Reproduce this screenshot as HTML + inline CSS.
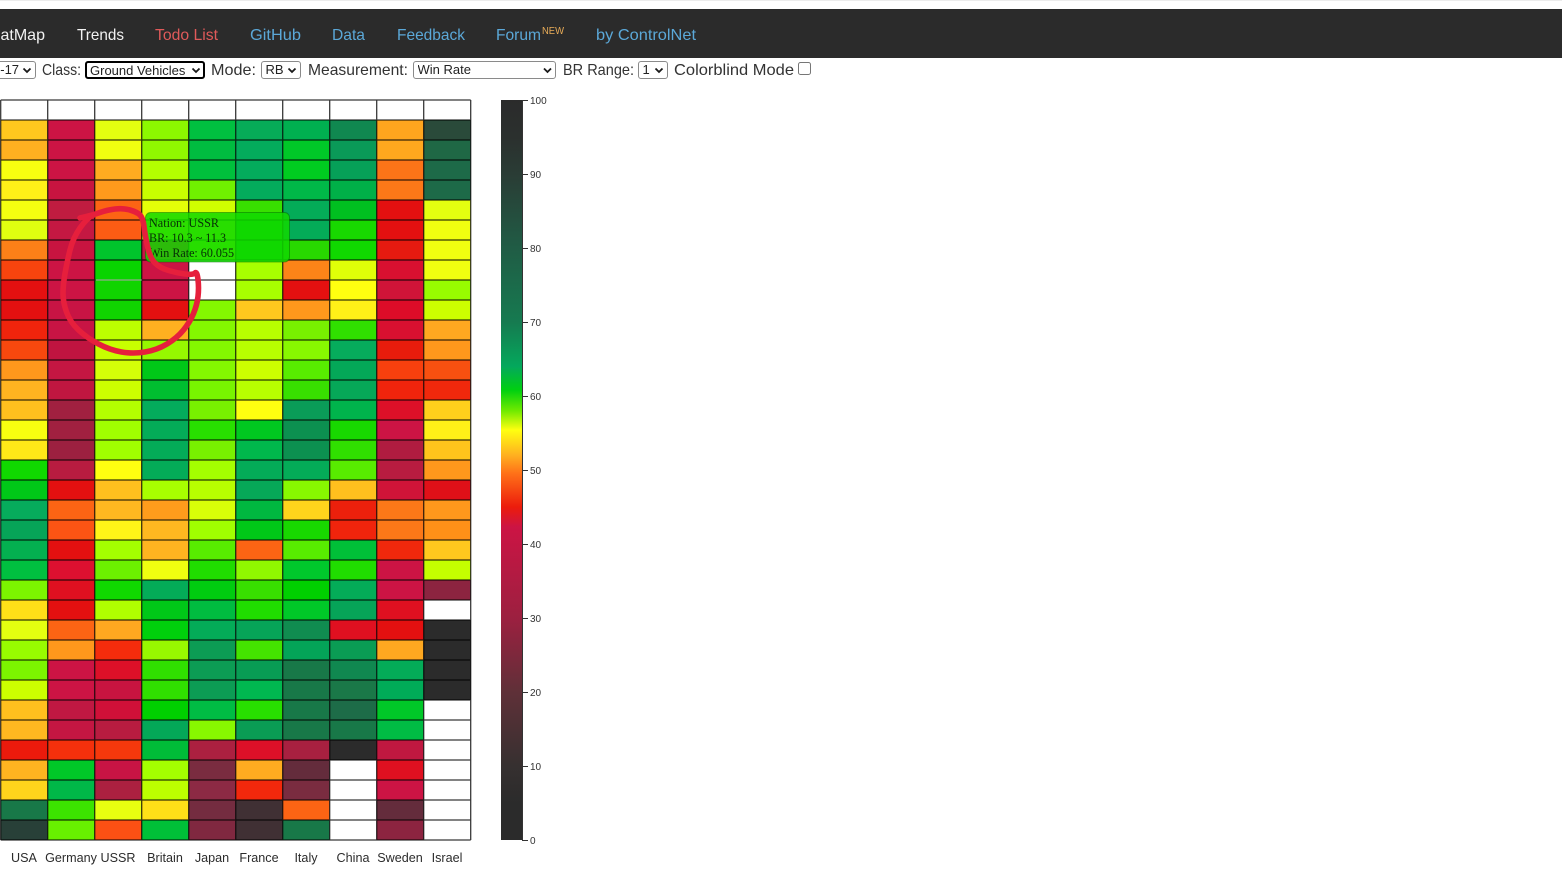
<!DOCTYPE html>
<html><head><meta charset="utf-8"><title>HeatMap</title>
<style>
html,body{margin:0;padding:0;background:#fff;width:1562px;height:878px;overflow:hidden}
svg{position:absolute;left:0;top:0;z-index:2;pointer-events:none}
rect.c,g.r rect{width:47px;height:20px}
select{position:absolute;top:61px;height:18px;box-sizing:border-box;margin:0;padding:0 0 1px 3.5px;font:13px "Liberation Sans",sans-serif;background:#fff;color:#222;border:1px solid #8a8a8a;border-radius:3px;appearance:none;-webkit-appearance:none}
input{position:absolute;left:797.5px;top:62px;width:13px;height:13px;margin:0}
.n{font:16px "Liberation Sans",sans-serif;fill:#5ba8d8}
.l{font:16px "Liberation Sans",sans-serif;fill:#333}
.x{font:12.6px "Liberation Sans",sans-serif;fill:#2c2c2c;text-anchor:middle}
.t{font:10px "Liberation Sans",sans-serif;fill:#333}
.p{font:12.2px "Liberation Serif",serif;fill:#063006}
</style></head><body>
<select style="left:-51px;width:87px"><option>2023-11-17</option></select>
<select style="left:85px;width:120px;border:2px solid #000;padding-left:3px;padding-bottom:0"><option>Ground Vehicles</option></select>
<select style="left:261px;width:40px"><option>RB</option></select>
<select style="left:413px;width:143px"><option>Win Rate</option></select>
<select style="left:638px;width:30px"><option>1</option></select>
<input type="checkbox">
<svg width="1562" height="878" viewBox="0 0 1562 878">
<defs><linearGradient id="g" x1="0" y1="0" x2="0" y2="1">
<stop offset="0" stop-color="#2b2b2b"/><stop offset=".05" stop-color="#2b302e"/><stop offset=".1" stop-color="#2a3c35"/><stop offset=".2" stop-color="#205c45"/><stop offset=".3" stop-color="#167a50"/><stop offset=".36" stop-color="#04a85c"/><stop offset=".392" stop-color="#00d010"/><stop offset=".42" stop-color="#70ea00"/><stop offset=".446" stop-color="#ffff10"/><stop offset=".48" stop-color="#ffb020"/><stop offset=".505" stop-color="#ff7018"/><stop offset=".55" stop-color="#ec1c0c"/><stop offset=".577" stop-color="#cc1444"/><stop offset=".7" stop-color="#9c2040"/><stop offset=".8" stop-color="#5f3038"/><stop offset=".9" stop-color="#363030"/><stop offset=".95" stop-color="#2b2b2b"/><stop offset="1" stop-color="#2b2b2b"/>
</linearGradient></defs>
<rect x="0" y="0" width="1562" height="1" fill="#ececec"/>
<rect x="0" y="9" width="1562" height="49" fill="#2b2b2b"/>
<text class="n" style="fill:#f2f2f2" x="-20" y="40" textLength="65" lengthAdjust="spacingAndGlyphs">HeatMap</text>
<text class="n" style="fill:#f2f2f2" x="77" y="40" textLength="47" lengthAdjust="spacingAndGlyphs">Trends</text>
<text class="n" style="fill:#e05a5a" x="155" y="40" textLength="63" lengthAdjust="spacingAndGlyphs">Todo List</text>
<text class="n" x="250" y="40" textLength="51" lengthAdjust="spacingAndGlyphs">GitHub</text>
<text class="n" x="332" y="40" textLength="33" lengthAdjust="spacingAndGlyphs">Data</text>
<text class="n" x="397" y="40" textLength="68" lengthAdjust="spacingAndGlyphs">Feedback</text>
<text class="n" x="496" y="40" textLength="45" lengthAdjust="spacingAndGlyphs">Forum</text>
<text x="542" y="34" style="font:10px 'Liberation Sans',sans-serif;fill:#e8ac58" textLength="22" lengthAdjust="spacingAndGlyphs">NEW</text>
<text class="n" x="596" y="40" textLength="100" lengthAdjust="spacingAndGlyphs">by ControlNet</text>
<text class="l" x="42" y="75" textLength="39" lengthAdjust="spacingAndGlyphs">Class:</text>
<text class="l" x="211" y="75" textLength="45" lengthAdjust="spacingAndGlyphs">Mode:</text>
<text class="l" x="308" y="75" textLength="100" lengthAdjust="spacingAndGlyphs">Measurement:</text>
<text class="l" x="563" y="75" textLength="71" lengthAdjust="spacingAndGlyphs">BR Range:</text>
<text class="l" x="674" y="75" textLength="120" lengthAdjust="spacingAndGlyphs">Colorblind Mode</text>
<path fill="none" stroke="#1a1a1a" stroke-width="1.8" d="M23.5 68.5L27 72L30.5 68.5M192.5 68.5L196 72L199.5 68.5M288.5 68.5L292 72L295.5 68.5M544 68.5L547.5 72L551 68.5M655.5 68.5L659 72L662.5 68.5"/>
<g transform="translate(.7 0)">
<g class="r" transform="translate(0 100)"><rect x="0" fill="#fff"/><rect x="47" fill="#fff"/><rect x="94" fill="#fff"/><rect x="141" fill="#fff"/><rect x="188" fill="#fff"/><rect x="235" fill="#fff"/><rect x="282" fill="#fff"/><rect x="329" fill="#fff"/><rect x="376" fill="#fff"/><rect x="423" fill="#fff"/></g>
<g class="r" transform="translate(0 120)"><rect x="0" fill="#ffc81e"/><rect x="47" fill="#cc1444"/><rect x="94" fill="#e4ff10"/><rect x="141" fill="#8cf800"/><rect x="188" fill="#00c040"/><rect x="235" fill="#06ac58"/><rect x="282" fill="#00b050"/><rect x="329" fill="#108850"/><rect x="376" fill="#ffa51e"/><rect x="423" fill="#2a4a3a"/></g>
<g class="r" transform="translate(0 140)"><rect x="0" fill="#ffb020"/><rect x="47" fill="#cc1444"/><rect x="94" fill="#f0ff10"/><rect x="141" fill="#90f800"/><rect x="188" fill="#00bc40"/><rect x="235" fill="#04ac5c"/><rect x="282" fill="#00c828"/><rect x="329" fill="#0a9a58"/><rect x="376" fill="#ffa81e"/><rect x="423" fill="#1f6845"/></g>
<g class="r" transform="translate(0 160)"><rect x="0" fill="#f8ff10"/><rect x="47" fill="#cc1444"/><rect x="94" fill="#ffac20"/><rect x="141" fill="#b4ff00"/><rect x="188" fill="#00c03c"/><rect x="235" fill="#04ac5c"/><rect x="282" fill="#00cc20"/><rect x="329" fill="#06a058"/><rect x="376" fill="#fc7418"/><rect x="423" fill="#1d6a48"/></g>
<g class="r" transform="translate(0 180)"><rect x="0" fill="#fff018"/><rect x="47" fill="#c81440"/><rect x="94" fill="#ff9a1c"/><rect x="141" fill="#c8ff00"/><rect x="188" fill="#70f000"/><rect x="235" fill="#04ac5c"/><rect x="282" fill="#00b848"/><rect x="329" fill="#00b048"/><rect x="376" fill="#fc7818"/><rect x="423" fill="#1d6a48"/></g>
<g class="r" transform="translate(0 200)"><rect x="0" fill="#f4ff10"/><rect x="47" fill="#c01c40"/><rect x="94" fill="#fc6414"/><rect x="141" fill="#e4ff08"/><rect x="188" fill="#d0ff00"/><rect x="235" fill="#38e000"/><rect x="282" fill="#04ac58"/><rect x="329" fill="#00c020"/><rect x="376" fill="#e41010"/><rect x="423" fill="#e4ff10"/></g>
<g class="r" transform="translate(0 220)"><rect x="0" fill="#e0ff10"/><rect x="47" fill="#c41842"/><rect x="94" fill="#fc5c14"/><rect x="141" fill="#c8ff00"/><rect x="188" fill="#b0ff00"/><rect x="235" fill="#10d800"/><rect x="282" fill="#04ac58"/><rect x="329" fill="#18d800"/><rect x="376" fill="#e41010"/><rect x="423" fill="#f0ff10"/></g>
<g class="r" transform="translate(0 240)"><rect x="0" fill="#fc8018"/><rect x="47" fill="#c81440"/><rect x="94" fill="#00c42c"/><rect x="141" fill="#c81444"/><rect x="188" fill="#a8ff00"/><rect x="235" fill="#10d800"/><rect x="282" fill="#28d800"/><rect x="329" fill="#10d800"/><rect x="376" fill="#e61a10"/><rect x="423" fill="#f0ff10"/></g>
<g class="r" transform="translate(0 260)"><rect x="0" fill="#f8440e"/><rect x="47" fill="#cc1444"/><rect x="94" fill="#08d400"/><rect x="141" fill="#cc1444"/><rect x="188" fill="#fff"/><rect x="235" fill="#a8ff00"/><rect x="282" fill="#fc8418"/><rect x="329" fill="#e0ff08"/><rect x="376" fill="#d81030"/><rect x="423" fill="#f0ff10"/></g>
<g class="r" transform="translate(0 280)"><rect x="0" fill="#e41010"/><rect x="47" fill="#cc1444"/><rect x="94" fill="#10d400"/><rect x="141" fill="#cc1444"/><rect x="188" fill="#fff"/><rect x="235" fill="#a8ff00"/><rect x="282" fill="#e41010"/><rect x="329" fill="#ffff10"/><rect x="376" fill="#d01438"/><rect x="423" fill="#98fc00"/></g>
<g class="r" transform="translate(0 300)"><rect x="0" fill="#e41010"/><rect x="47" fill="#c81444"/><rect x="94" fill="#10d400"/><rect x="141" fill="#e41010"/><rect x="188" fill="#84f800"/><rect x="235" fill="#ffc81e"/><rect x="282" fill="#ff981c"/><rect x="329" fill="#fff018"/><rect x="376" fill="#dc0c28"/><rect x="423" fill="#ccff00"/></g>
<g class="r" transform="translate(0 320)"><rect x="0" fill="#f0240c"/><rect x="47" fill="#c81444"/><rect x="94" fill="#bcff00"/><rect x="141" fill="#ffb020"/><rect x="188" fill="#84f800"/><rect x="235" fill="#b8ff00"/><rect x="282" fill="#78f000"/><rect x="329" fill="#30e000"/><rect x="376" fill="#d81030"/><rect x="423" fill="#ffa820"/></g>
<g class="r" transform="translate(0 340)"><rect x="0" fill="#f8480e"/><rect x="47" fill="#c01440"/><rect x="94" fill="#c8ff00"/><rect x="141" fill="#96f800"/><rect x="188" fill="#84f800"/><rect x="235" fill="#b8ff00"/><rect x="282" fill="#88f800"/><rect x="329" fill="#06ac5c"/><rect x="376" fill="#e81c0c"/><rect x="423" fill="#ff981c"/></g>
<g class="r" transform="translate(0 360)"><rect x="0" fill="#ff981c"/><rect x="47" fill="#c41642"/><rect x="94" fill="#d4ff08"/><rect x="141" fill="#00c818"/><rect x="188" fill="#84f800"/><rect x="235" fill="#ccff00"/><rect x="282" fill="#58ec00"/><rect x="329" fill="#04a858"/><rect x="376" fill="#f8400e"/><rect x="423" fill="#f85010"/></g>
<g class="r" transform="translate(0 380)"><rect x="0" fill="#ffb420"/><rect x="47" fill="#c01640"/><rect x="94" fill="#ccff00"/><rect x="141" fill="#00be30"/><rect x="188" fill="#78f400"/><rect x="235" fill="#b8ff00"/><rect x="282" fill="#38e000"/><rect x="329" fill="#06a858"/><rect x="376" fill="#f0240c"/><rect x="423" fill="#f0280c"/></g>
<g class="r" transform="translate(0 400)"><rect x="0" fill="#ffc01e"/><rect x="47" fill="#a02040"/><rect x="94" fill="#b4ff00"/><rect x="141" fill="#04ac5c"/><rect x="188" fill="#78f000"/><rect x="235" fill="#ffff10"/><rect x="282" fill="#0a9c58"/><rect x="329" fill="#00b44c"/><rect x="376" fill="#dc1028"/><rect x="423" fill="#ffd01c"/></g>
<g class="r" transform="translate(0 420)"><rect x="0" fill="#f8ff10"/><rect x="47" fill="#a02040"/><rect x="94" fill="#a0ff00"/><rect x="141" fill="#04ac58"/><rect x="188" fill="#28e000"/><rect x="235" fill="#00c820"/><rect x="282" fill="#0c9050"/><rect x="329" fill="#18d800"/><rect x="376" fill="#cc1444"/><rect x="423" fill="#fff018"/></g>
<g class="r" transform="translate(0 440)"><rect x="0" fill="#ffe818"/><rect x="47" fill="#9c2040"/><rect x="94" fill="#a0ff00"/><rect x="141" fill="#04ac58"/><rect x="188" fill="#78f000"/><rect x="235" fill="#00b84c"/><rect x="282" fill="#0c9050"/><rect x="329" fill="#30e000"/><rect x="376" fill="#b01c40"/><rect x="423" fill="#ffc41c"/></g>
<g class="r" transform="translate(0 460)"><rect x="0" fill="#10d800"/><rect x="47" fill="#b81c40"/><rect x="94" fill="#ffff10"/><rect x="141" fill="#04ac58"/><rect x="188" fill="#a4ff00"/><rect x="235" fill="#04ac58"/><rect x="282" fill="#04ac58"/><rect x="329" fill="#58ec00"/><rect x="376" fill="#b81c40"/><rect x="423" fill="#ff981c"/></g>
<g class="r" transform="translate(0 480)"><rect x="0" fill="#00c818"/><rect x="47" fill="#e41010"/><rect x="94" fill="#ffc01e"/><rect x="141" fill="#a8ff00"/><rect x="188" fill="#b8ff00"/><rect x="235" fill="#06a858"/><rect x="282" fill="#88f800"/><rect x="329" fill="#ffc01e"/><rect x="376" fill="#d01438"/><rect x="423" fill="#e01018"/></g>
<g class="r" transform="translate(0 500)"><rect x="0" fill="#06ac5c"/><rect x="47" fill="#fc6414"/><rect x="94" fill="#ffb820"/><rect x="141" fill="#ff9c1c"/><rect x="188" fill="#d8ff08"/><rect x="235" fill="#00b840"/><rect x="282" fill="#ffd41c"/><rect x="329" fill="#ec200c"/><rect x="376" fill="#fc7818"/><rect x="423" fill="#ff981c"/></g>
<g class="r" transform="translate(0 520)"><rect x="0" fill="#06a458"/><rect x="47" fill="#fc5414"/><rect x="94" fill="#fff418"/><rect x="141" fill="#ffb820"/><rect x="188" fill="#a0ff00"/><rect x="235" fill="#00c818"/><rect x="282" fill="#18d800"/><rect x="329" fill="#f0240c"/><rect x="376" fill="#fc7818"/><rect x="423" fill="#ff9018"/></g>
<g class="r" transform="translate(0 540)"><rect x="0" fill="#04b050"/><rect x="47" fill="#e41010"/><rect x="94" fill="#a4ff00"/><rect x="141" fill="#ffb420"/><rect x="188" fill="#58ec00"/><rect x="235" fill="#fc6414"/><rect x="282" fill="#58ec00"/><rect x="329" fill="#00c038"/><rect x="376" fill="#f0280c"/><rect x="423" fill="#ffc81e"/></g>
<g class="r" transform="translate(0 560)"><rect x="0" fill="#00c040"/><rect x="47" fill="#dc1030"/><rect x="94" fill="#6cf000"/><rect x="141" fill="#f0ff10"/><rect x="188" fill="#20dc00"/><rect x="235" fill="#90f800"/><rect x="282" fill="#00c82c"/><rect x="329" fill="#20dc00"/><rect x="376" fill="#cc1444"/><rect x="423" fill="#c4ff00"/></g>
<g class="r" transform="translate(0 580)"><rect x="0" fill="#7cf400"/><rect x="47" fill="#e01020"/><rect x="94" fill="#10d800"/><rect x="141" fill="#04ac58"/><rect x="188" fill="#00cc10"/><rect x="235" fill="#38e000"/><rect x="282" fill="#00d000"/><rect x="329" fill="#04ac58"/><rect x="376" fill="#cc1444"/><rect x="423" fill="#8c2440"/></g>
<g class="r" transform="translate(0 600)"><rect x="0" fill="#ffe018"/><rect x="47" fill="#e41010"/><rect x="94" fill="#b0ff00"/><rect x="141" fill="#00c818"/><rect x="188" fill="#00bc40"/><rect x="235" fill="#20dc00"/><rect x="282" fill="#00c828"/><rect x="329" fill="#06a458"/><rect x="376" fill="#e01020"/><rect x="423" fill="#fff"/></g>
<g class="r" transform="translate(0 620)"><rect x="0" fill="#e4ff10"/><rect x="47" fill="#fc6414"/><rect x="94" fill="#ffa820"/><rect x="141" fill="#00d00c"/><rect x="188" fill="#04ac58"/><rect x="235" fill="#06a458"/><rect x="282" fill="#108c50"/><rect x="329" fill="#e01020"/><rect x="376" fill="#e41010"/><rect x="423" fill="#2b2b2b"/></g>
<g class="r" transform="translate(0 640)"><rect x="0" fill="#98fc00"/><rect x="47" fill="#ff981c"/><rect x="94" fill="#f42c0c"/><rect x="141" fill="#98f800"/><rect x="188" fill="#0c9c54"/><rect x="235" fill="#44e400"/><rect x="282" fill="#04a458"/><rect x="329" fill="#0a9c54"/><rect x="376" fill="#ffa820"/><rect x="423" fill="#2b2b2b"/></g>
<g class="r" transform="translate(0 660)"><rect x="0" fill="#7cf400"/><rect x="47" fill="#cc1444"/><rect x="94" fill="#dc1028"/><rect x="141" fill="#30e000"/><rect x="188" fill="#0c9c54"/><rect x="235" fill="#089c54"/><rect x="282" fill="#187848"/><rect x="329" fill="#108850"/><rect x="376" fill="#04ac58"/><rect x="423" fill="#2b2b2b"/></g>
<g class="r" transform="translate(0 680)"><rect x="0" fill="#ccff00"/><rect x="47" fill="#cc1444"/><rect x="94" fill="#c81440"/><rect x="141" fill="#30e000"/><rect x="188" fill="#0c9c54"/><rect x="235" fill="#00b850"/><rect x="282" fill="#187848"/><rect x="329" fill="#1a7848"/><rect x="376" fill="#00ac58"/><rect x="423" fill="#2b2b2b"/></g>
<g class="r" transform="translate(0 700)"><rect x="0" fill="#ffc01e"/><rect x="47" fill="#c01842"/><rect x="94" fill="#d01038"/><rect x="141" fill="#00d000"/><rect x="188" fill="#00bc44"/><rect x="235" fill="#28e000"/><rect x="282" fill="#187848"/><rect x="329" fill="#1d6c48"/><rect x="376" fill="#00c828"/><rect x="423" fill="#fff"/></g>
<g class="r" transform="translate(0 720)"><rect x="0" fill="#ffb820"/><rect x="47" fill="#c41642"/><rect x="94" fill="#b81c40"/><rect x="141" fill="#04a858"/><rect x="188" fill="#88f800"/><rect x="235" fill="#0a9c54"/><rect x="282" fill="#187848"/><rect x="329" fill="#187848"/><rect x="376" fill="#00bc44"/><rect x="423" fill="#fff"/></g>
<g class="r" transform="translate(0 740)"><rect x="0" fill="#ec1a0c"/><rect x="47" fill="#f4300c"/><rect x="94" fill="#f6380c"/><rect x="141" fill="#00bc38"/><rect x="188" fill="#ac2040"/><rect x="235" fill="#dc1028"/><rect x="282" fill="#a82040"/><rect x="329" fill="#2b2b2b"/><rect x="376" fill="#c01840"/><rect x="423" fill="#fff"/></g>
<g class="r" transform="translate(0 760)"><rect x="0" fill="#ffb420"/><rect x="47" fill="#00c828"/><rect x="94" fill="#c81444"/><rect x="141" fill="#a4ff00"/><rect x="188" fill="#7a2c40"/><rect x="235" fill="#ffac20"/><rect x="282" fill="#642c3c"/><rect x="329" fill="#fff"/><rect x="376" fill="#e01020"/><rect x="423" fill="#fff"/></g>
<g class="r" transform="translate(0 780)"><rect x="0" fill="#ffd41c"/><rect x="47" fill="#00b848"/><rect x="94" fill="#ac2040"/><rect x="141" fill="#bcff00"/><rect x="188" fill="#8c2a44"/><rect x="235" fill="#f2280c"/><rect x="282" fill="#7a2c40"/><rect x="329" fill="#fff"/><rect x="376" fill="#cc1444"/><rect x="423" fill="#fff"/></g>
<g class="r" transform="translate(0 800)"><rect x="0" fill="#187848"/><rect x="47" fill="#3ce400"/><rect x="94" fill="#e8ff10"/><rect x="141" fill="#ffe018"/><rect x="188" fill="#742c40"/><rect x="235" fill="#403034"/><rect x="282" fill="#fc6414"/><rect x="329" fill="#fff"/><rect x="376" fill="#642c3c"/><rect x="423" fill="#fff"/></g>
<g class="r" transform="translate(0 820)"><rect x="0" fill="#284038"/><rect x="47" fill="#68f000"/><rect x="94" fill="#fc5014"/><rect x="141" fill="#00c038"/><rect x="188" fill="#802840"/><rect x="235" fill="#403034"/><rect x="282" fill="#187848"/><rect x="329" fill="#fff"/><rect x="376" fill="#8c2440"/><rect x="423" fill="#fff"/></g>
<path fill="none" stroke="#000" stroke-opacity=".78" stroke-width="1.3" d="M0 100V840M47 100V840M94 100V840M141 100V840M188 100V840M235 100V840M282 100V840M329 100V840M376 100V840M423 100V840M470 100V840M0 100H470M0 120H470M0 140H470M0 160H470M0 180H470M0 200H470M0 220H470M0 240H470M0 260H470M0 280H470M0 300H470M0 320H470M0 340H470M0 360H470M0 380H470M0 400H470M0 420H470M0 440H470M0 460H470M0 480H470M0 500H470M0 520H470M0 540H470M0 560H470M0 580H470M0 600H470M0 620H470M0 640H470M0 660H470M0 680H470M0 700H470M0 720H470M0 740H470M0 760H470M0 780H470M0 800H470M0 820H470M0 840H470"/>
<path d="M95 280H141" stroke="#b8c8b0" stroke-width="1"/>
</g>
<rect x="145.5" y="212.5" width="144" height="49.5" rx="5" fill="#10d800" fill-opacity=".85" stroke="#006000" stroke-opacity=".45"/>
<text class="p" x="149" y="227" textLength="70" lengthAdjust="spacingAndGlyphs">Nation: USSR</text>
<text class="p" x="149" y="242" textLength="77" lengthAdjust="spacingAndGlyphs">BR: 10.3 ~ 11.3</text>
<text class="p" x="149" y="257" textLength="85" lengthAdjust="spacingAndGlyphs">Win Rate: 60.055</text>
<path fill="none" stroke="#e61f3c" stroke-width="5.6" stroke-linecap="round" stroke-linejoin="round" d="M80 218L86.5 216.5Q93 215 100 212.5Q107 210 115 209Q123 208 130 210Q137 212 140 215Q143 218 144 226.5Q145 235 147.5 246.5Q150 258 155 263Q160 268 168.5 270.5Q177 273 185 274Q193 275 195 273Q197 271 198 279.5Q199 288 198 296.5Q197 305 193.5 313.5Q190 322 183.5 330Q177 338 167 344Q157 350 145 352Q133 354 121.5 352Q110 350 98.5 344Q87 338 78.5 330Q70 322 66.5 312Q63 302 63 293.5Q63 285 65 273.5Q67 262 70 250Q73 238 80 228Q87 218 93.5 215"/>
<rect x="501" y="100" width="21" height="740" fill="url(#g)"/>
<path fill="none" stroke="#333" stroke-width="1" d="M522.5 100V840M522 100.5H528M522 174.5H528M522 248.5H528M522 322.5H528M522 396.5H528M522 470.5H528M522 544.5H528M522 618.5H528M522 692.5H528M522 766.5H528M522 840.5H528"/>
<text class="t" x="530" y="104">100</text><text class="t" x="530" y="178">90</text><text class="t" x="530" y="252">80</text><text class="t" x="530" y="326">70</text><text class="t" x="530" y="400">60</text><text class="t" x="530" y="474">50</text><text class="t" x="530" y="548">40</text><text class="t" x="530" y="622">30</text><text class="t" x="530" y="696">20</text><text class="t" x="530" y="770">10</text><text class="t" x="530" y="844">0</text>
<text class="x" x="24" y="862">USA</text><text class="x" x="71" y="862">Germany</text><text class="x" x="118" y="862">USSR</text><text class="x" x="165" y="862">Britain</text><text class="x" x="212" y="862">Japan</text><text class="x" x="259" y="862">France</text><text class="x" x="306" y="862">Italy</text><text class="x" x="353" y="862">China</text><text class="x" x="400" y="862">Sweden</text><text class="x" x="447" y="862">Israel</text>
</svg>
</body></html>
